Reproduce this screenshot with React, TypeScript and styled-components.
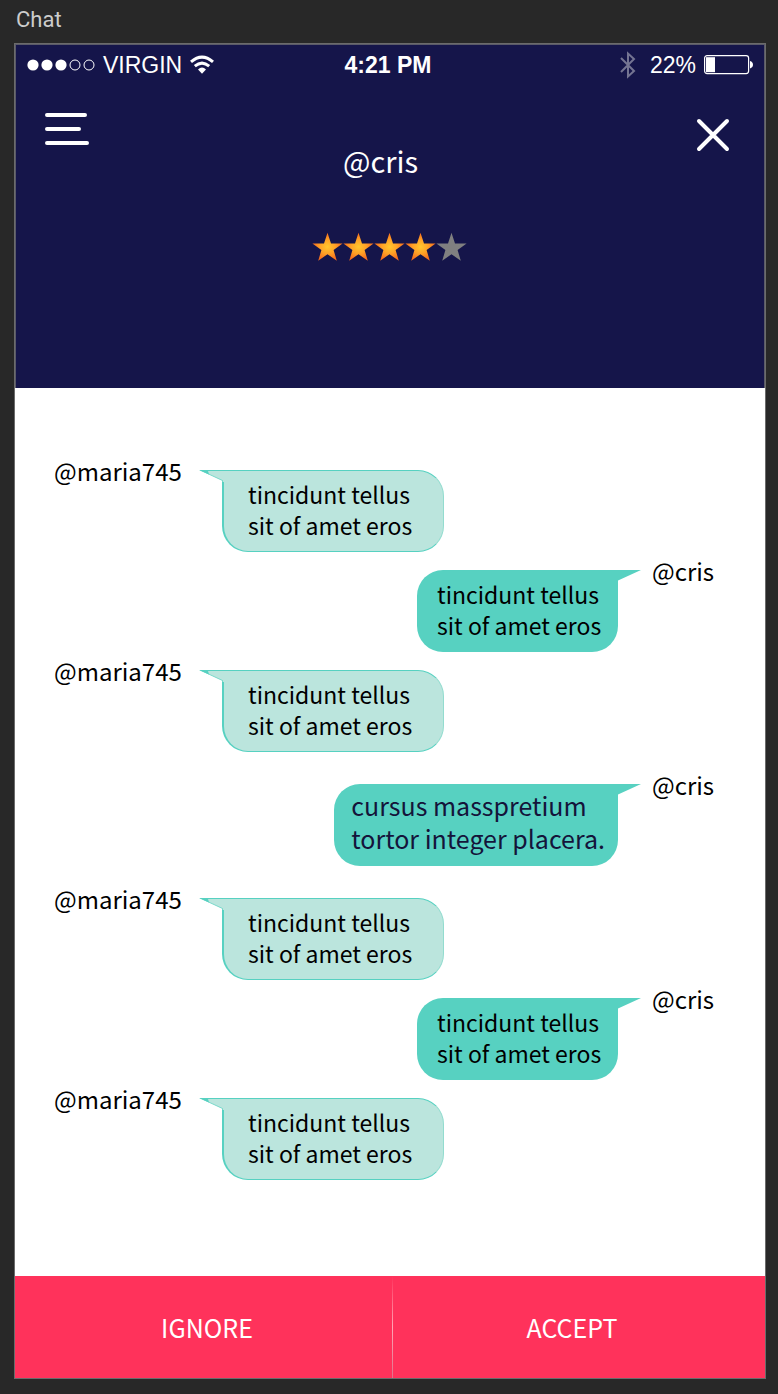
import React from "react";
import styled, { createGlobalStyle } from "styled-components";

const navy = "#15154a";
const pink = "#ff325b";
const teal = "#57d1c1";
const mint = "#bbe5dd";
const humanist = `"Noto Sans CJK SC", "Noto Sans", sans-serif`;
const grotesque = `"Liberation Sans", Arial, sans-serif`;

const GlobalStyle = createGlobalStyle`
  *, *::before, *::after { box-sizing: border-box; }
  body { margin: 0; background: #282828; }
`;

const Page = styled.div`
  min-height: 100vh;
  padding: 0 12px 15px 14px;
  display: flex;
  flex-direction: column;
`;

const BoardLabel = styled.div`
  height: 43px;
  padding: 7px 2px 0;
  font: 22px/26px Roboto, sans-serif;
  color: #cccccc;
`;

const Board = styled.main`
  flex: 1;
  display: flex;
  flex-direction: column;
  border: 1px solid #6b6b6b;
  background: #ffffff;
  font-family: ${humanist};
`;

const Header = styled.header`
  height: 344px;
  background: ${navy};
  color: #ffffff;
  box-shadow: inset 1px 1px #5a5a68, inset -1px 0 #5a5a68;
`;

const StatusBar = styled.div`
  display: grid;
  grid-template-columns: 1fr auto 1fr;
  align-items: center;
  height: 42px;
  padding: 0 12px;
  font: 23px/28px ${grotesque};
`;

const StatusGroup = styled.div<{ $end?: boolean }>`
  display: flex;
  align-items: center;
  gap: 8px;
  justify-content: ${(p) => (p.$end ? "flex-end" : "flex-start")};
`;

const Clock = styled.time`
  padding-right: 4px;
  font-weight: 700;
`;

const NavBar = styled.nav`
  display: flex;
  justify-content: space-between;
  align-items: flex-start;
  padding: 26px 35px 0 30px;
`;

const IconButton = styled.button<{ $drop?: boolean }>`
  display: block;
  padding: 0;
  margin-top: ${(p) => (p.$drop ? "6px" : "0")};
  border: 0;
  background: none;
  cursor: pointer;
  svg { display: block; }
`;

const Title = styled.h1`
  margin: 0;
  padding: 26px 26px 2px 0;
  font: 400 29px/44px ${humanist};
`;

const Rating = styled.div`
  display: flex;
  justify-content: center;
  padding: 48px 2px 0 0;
  svg { display: block; }
`;

const Conversation = styled.section`
  flex: 1;
  padding: 82px 0 96px;
`;

const Message = styled.article<{ $mine: boolean; $loose: boolean }>`
  display: flex;
  flex-direction: ${(p) => (p.$mine ? "row-reverse" : "row")};
  align-items: flex-start;
  margin-top: ${(p) => (p.$loose ? "32px" : "18px")};
  &:first-child { margin-top: 0; }
`;

const Author = styled.div<{ $mine: boolean }>`
  width: ${(p) => (p.$mine ? "147px" : "207px")};
  padding-left: ${(p) => (p.$mine ? "34px" : "39px")};
  margin-top: -15px;
  font-size: 24px;
  line-height: 32px;
  color: #000000;
`;

const Bubble = styled.div<{ $mine: boolean; $wide?: boolean }>`
  position: relative;
  min-width: ${(p) => (p.$mine ? "201px" : "222px")};
  height: 82px;
  padding: ${(p) => (p.$wide ? "5px 13px 0 17px" : p.$mine ? "9px 12px 0 20px" : "8px 12px 0 24px")};
  border-style: solid;
  border-color: ${teal};
  border-width: ${(p) => (p.$mine ? "0" : "1px 1px 1px 2px")};
  border-right-color: ${(p) => (p.$mine ? teal : "#93dccf")};
  border-radius: ${(p) => (p.$mine ? "26px 0 26px 26px" : "0 26px 26px 26px")};
  background: ${(p) => (p.$mine ? teal : mint)};
  color: ${(p) => (p.$wide ? "#14143a" : "#000000")};
  font-size: ${(p) => (p.$wide ? "25px" : "23px")};
  line-height: ${(p) => (p.$wide ? "33px" : "31px")};
  white-space: pre-line;
`;

const Tail = styled.svg<{ $mine: boolean }>`
  position: absolute;
  top: ${(p) => (p.$mine ? "0" : "-1px")};
  ${(p) => (p.$mine ? "right: -24px;" : "left: -26px;")}
`;

const Actions = styled.footer`
  display: grid;
  grid-template-columns: 378fr 372fr;
  height: 102px;
  background: ${pink};
`;

const Action = styled.button<{ $divided?: boolean }>`
  padding: ${(p) => (p.$divided ? "0 0 0 6px" : "0 14px 0 0")};
  border: 0;
  background: ${(p) =>
    p.$divided
      ? `linear-gradient(${pink}, #ffa6b6 50%, #e0708a) right / 1px 100% no-repeat`
      : "none"};
  color: #ffffff;
  font: 25px/32px ${humanist};
  cursor: pointer;
`;

function SignalDots() {
  return (
    <svg width="68" height="12" viewBox="0 0 68 12" aria-label="Signal strength 3 of 5">
      {[6, 20, 34].map((x) => (
        <circle key={x} cx={x} cy="6" r="5.6" fill="#fff" />
      ))}
      {[48, 62].map((x) => (
        <circle key={x} cx={x} cy="6" r="5" fill="none" stroke="#fff" />
      ))}
    </svg>
  );
}

function WifiIcon() {
  return (
    <svg width="24" height="20" viewBox="0 0 24 20" aria-label="Wi-Fi">
      <g fill="none" stroke="#fff" strokeWidth="3">
        <path d="M1 6.8Q12-2.6 23 6.8" />
        <path d="M4.8 11.2Q12 5 19.2 11.2" />
      </g>
      <path d="M8 14.4Q12 10.8 16 14.4L12 18.8Z" fill="#fff" />
    </svg>
  );
}

function BluetoothIcon() {
  return (
    <svg width="22" height="28" viewBox="0 0 22 28" aria-label="Bluetooth">
      <path
        d="M1 7L14 20L8 25.4V2.6L14 8L1 21"
        fill="none"
        stroke="#747492"
        strokeWidth="2"
      />
    </svg>
  );
}

function BatteryIcon() {
  return (
    <svg width="49" height="20" viewBox="0 0 49 20" aria-label="Battery">
      <rect x=".6" y=".6" width="44" height="18" rx="2.5" fill="none" stroke="#fff" strokeWidth="1.2" />
      <rect x="2" y="2.2" width="9" height="15" fill="#fff" />
      <path d="M46 6Q49 7 49 9.7Q49 12.4 46 13.4Z" fill="#fff" />
    </svg>
  );
}

function Star({ lit }: { lit: boolean }) {
  return (
    <svg width="31" height="30" viewBox="0 0 31 30">
      <path
        d="M15.5.8L19 11.4H30.6L21.6 18.1L24.8 28.8L15.5 22.3L6.2 28.8L9.4 18.1L.4 11.4H12Z"
        fill={lit ? "url(#starGlow)" : "#808080"}
      />
    </svg>
  );
}

function BubbleTail({ mine }: { mine: boolean }) {
  return mine ? (
    <Tail $mine width="25" height="12" viewBox="0 0 25 12" aria-hidden="true">
      <path d="M0 0H24L1 10.5H0Z" fill={teal} />
    </Tail>
  ) : (
    <Tail $mine={false} width="28" height="12" viewBox="0 0 28 12" aria-hidden="true">
      <path d="M2 0H28V12H24.5V10.5Z" fill={mint} />
      <path d="M2 0L24.5 10.5V12" fill="none" stroke="#78d8ca" />
      <path d="M1 0H28V1H10L11 4.4Z" fill={teal} />
    </Tail>
  );
}

const greeting = "tincidunt tellus\nsit of amet eros";

const messages = [
  { mine: false, text: greeting },
  { mine: true, text: greeting },
  { mine: false, text: greeting },
  { mine: true, text: "cursus masspretium\ntortor integer placera.", wide: true, loose: true },
  { mine: false, text: greeting, loose: true },
  { mine: true, text: greeting },
  { mine: false, text: greeting },
];

export default function App() {
  return (
    <Page>
      <GlobalStyle />
      <BoardLabel>Chat</BoardLabel>
      <Board>
        <Header>
          <StatusBar>
            <StatusGroup>
              <SignalDots />
              <span>VIRGIN</span>
              <WifiIcon />
            </StatusGroup>
            <Clock>4:21 PM</Clock>
            <StatusGroup $end>
              <BluetoothIcon />
              <span>22%</span>
              <BatteryIcon />
            </StatusGroup>
          </StatusBar>
          <NavBar>
            <IconButton type="button" aria-label="Menu">
              <svg width="46" height="34" viewBox="0 0 46 34">
                <path d="M2 3H40M2 17H34M2 31H42" stroke="#fff" strokeWidth="4" strokeLinecap="round" />
              </svg>
            </IconButton>
            <Title>@cris</Title>
            <IconButton type="button" aria-label="Close" $drop>
              <svg width="34" height="34" viewBox="0 0 34 34">
                <path d="M3 3L31 31M31 3L3 31" stroke="#fff" strokeWidth="4" strokeLinecap="round" />
              </svg>
            </IconButton>
          </NavBar>
          <Rating role="img" aria-label="4 out of 5 stars">
            <svg width="0" height="0">
              <radialGradient id="starGlow">
                <stop offset="0" stopColor="#ffc72e" />
                <stop offset=".5" stopColor="#ffa126" />
                <stop offset="1" stopColor="#f66a1c" />
              </radialGradient>
            </svg>
            {[1, 2, 3, 4, 5].map((n) => (
              <Star key={n} lit={n <= 4} />
            ))}
          </Rating>
        </Header>
        <Conversation>
          {messages.map((m, i) => (
            <Message key={i} $mine={m.mine} $loose={!!m.loose}>
              <Author $mine={m.mine}>{m.mine ? "@cris" : "@maria745"}</Author>
              <Bubble $mine={m.mine} $wide={m.wide}>
                <BubbleTail mine={m.mine} />
                {m.text}
              </Bubble>
            </Message>
          ))}
        </Conversation>
        <Actions>
          <Action type="button" $divided>IGNORE</Action>
          <Action type="button">ACCEPT</Action>
        </Actions>
      </Board>
    </Page>
  );
}
